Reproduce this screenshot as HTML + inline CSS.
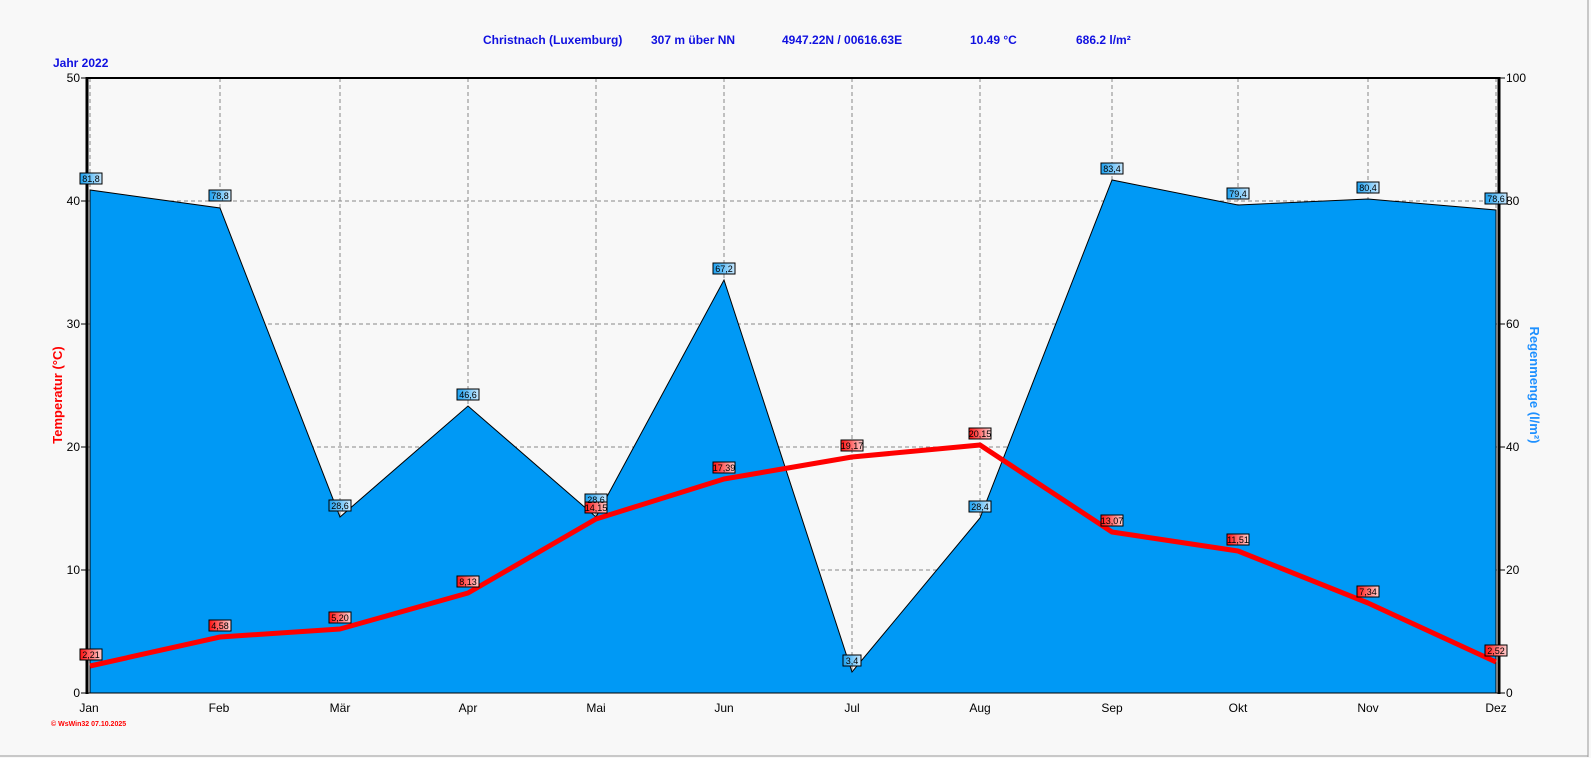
<!DOCTYPE html>
<html><head><meta charset="utf-8"><style>
html,body{margin:0;padding:0;background:#f8f8f8;}
svg{display:block;font-family:"Liberation Sans",sans-serif;}
</style></head><body>
<svg width="1591" height="758" viewBox="0 0 1591 758" xmlns="http://www.w3.org/2000/svg">
<defs>
<linearGradient id="bg" x1="0" x2="1"><stop offset="0" stop-color="#1aa0f0"/><stop offset="1" stop-color="#c8e8ff"/></linearGradient>
<linearGradient id="rg" x1="0" x2="1"><stop offset="0" stop-color="#ff1010"/><stop offset="1" stop-color="#ffd0d0"/></linearGradient>
</defs>
<rect width="1591" height="758" fill="#f8f8f8"/>
<line x1="1588" y1="0" x2="1588" y2="757" stroke="#999"/>
<line x1="0" y1="756" x2="1588" y2="756" stroke="#999"/>
<g font-weight="bold" font-size="12" fill="#1010e0">
<text x="483" y="44">Christnach (Luxemburg)</text>
<text x="651" y="44">307 m über NN</text>
<text x="782" y="44">4947.22N / 00616.63E</text>
<text x="970" y="44">10.49 °C</text>
<text x="1076" y="44">686.2 l/m²</text>
<text x="53" y="67">Jahr 2022</text>
</g>
<!-- grid -->
<g stroke="#888" stroke-dasharray="4,3" stroke-width="1">
<line x1="86" y1="201" x2="1499" y2="201"/><line x1="86" y1="324" x2="1499" y2="324"/>
<line x1="86" y1="447" x2="1499" y2="447"/><line x1="86" y1="570" x2="1499" y2="570"/>
<line x1="90" y1="78" x2="90" y2="693"/><line x1="220" y1="78" x2="220" y2="693"/>
<line x1="340" y1="78" x2="340" y2="693"/><line x1="468" y1="78" x2="468" y2="693"/>
<line x1="596" y1="78" x2="596" y2="693"/><line x1="724" y1="78" x2="724" y2="693"/>
<line x1="852" y1="78" x2="852" y2="693"/><line x1="980" y1="78" x2="980" y2="693"/>
<line x1="1112" y1="78" x2="1112" y2="693"/><line x1="1238" y1="78" x2="1238" y2="693"/>
<line x1="1368" y1="78" x2="1368" y2="693"/><line x1="1496" y1="78" x2="1496" y2="693"/>
</g>
<!-- rain area -->
<polygon fill="#0099f5" stroke="#000" stroke-width="1" points="90,693 90,190 220,208 340,517 468,406 596,517 724,280 852,672 980,518 1112,180 1238,205 1368,199 1496,210 1496,693"/>
<line x1="86" y1="78" x2="1499" y2="78" stroke="#000" stroke-width="2"/>
<line x1="86" y1="693" x2="1499" y2="693" stroke="#000" stroke-width="1"/>
<line x1="87" y1="77" x2="87" y2="694" stroke="#000" stroke-width="3"/>
<line x1="1499" y1="77" x2="1499" y2="694" stroke="#000" stroke-width="3"/>
<!-- temp line -->
<polyline fill="none" stroke="#ff0000" stroke-width="5" stroke-linejoin="round" points="90,666 220,637 340,629 468,593 596,519 724,479 852,457 980,445 1112,532 1238,551 1368,603 1496,662"/>
<!-- axis labels -->
<g font-size="12" fill="#000">
<g text-anchor="end">
<text x="80" y="82">50</text><text x="80" y="205">40</text><text x="80" y="328">30</text>
<text x="80" y="451">20</text><text x="80" y="574">10</text><text x="80" y="697">0</text>
</g>
<text x="1506" y="82">100</text><text x="1506" y="205">80</text><text x="1506" y="328">60</text>
<text x="1506" y="451">40</text><text x="1506" y="574">20</text><text x="1506" y="697">0</text>
<g text-anchor="middle">
<text x="89" y="712">Jan</text><text x="219" y="712">Feb</text><text x="340" y="712">Mär</text>
<text x="468" y="712">Apr</text><text x="596" y="712">Mai</text><text x="724" y="712">Jun</text>
<text x="852" y="712">Jul</text><text x="980" y="712">Aug</text><text x="1112" y="712">Sep</text>
<text x="1238" y="712">Okt</text><text x="1368" y="712">Nov</text><text x="1496" y="712">Dez</text>
</g>
</g>
<g stroke="#000"><line x1="81" y1="78" x2="86" y2="78"/><line x1="81" y1="201" x2="86" y2="201"/><line x1="81" y1="324" x2="86" y2="324"/><line x1="81" y1="447" x2="86" y2="447"/><line x1="81" y1="570" x2="86" y2="570"/><line x1="81" y1="693" x2="86" y2="693"/>
<line x1="1499" y1="78" x2="1505" y2="78"/><line x1="1499" y1="201" x2="1505" y2="201"/><line x1="1499" y1="324" x2="1505" y2="324"/><line x1="1499" y1="447" x2="1505" y2="447"/><line x1="1499" y1="570" x2="1505" y2="570"/><line x1="1499" y1="693" x2="1505" y2="693"/></g>
<text transform="translate(62,395) rotate(-90)" text-anchor="middle" font-size="13" font-weight="bold" fill="#ff0000">Temperatur  (°C)</text>
<text transform="translate(1530,385) rotate(90)" text-anchor="middle" font-size="13" font-weight="bold" fill="#1e90ff">Regenmenge  (l/m²)</text>
<text x="51" y="726" font-size="7" fill="#ff0000" font-weight="bold">© WsWin32  07.10.2025</text>
<!-- labels -->
<g font-size="9" text-anchor="middle" stroke="#000" stroke-width="1">
<g fill="url(#bg)">
<rect x="80" y="173" width="22" height="11"/><rect x="209" y="190" width="22" height="11"/>
<rect x="329" y="500" width="22" height="11"/><rect x="457" y="389" width="22" height="11"/>
<rect x="585" y="494" width="22" height="11"/><rect x="713" y="263" width="22" height="11"/>
<rect x="843" y="655" width="18" height="11"/><rect x="969" y="501" width="22" height="11"/>
<rect x="1101" y="163" width="22" height="11"/><rect x="1227" y="188" width="22" height="11"/>
<rect x="1357" y="182" width="22" height="11"/><rect x="1485" y="193" width="22" height="11"/>
</g>
<g fill="url(#rg)">
<rect x="80" y="649" width="22" height="11"/><rect x="209" y="620" width="22" height="11"/>
<rect x="329" y="612" width="22" height="11"/><rect x="457" y="576" width="22" height="11"/>
<rect x="585" y="502" width="22" height="11"/><rect x="713" y="462" width="22" height="11"/>
<rect x="841" y="440" width="22" height="11"/><rect x="969" y="428" width="22" height="11"/>
<rect x="1101" y="515" width="22" height="11"/><rect x="1227" y="534" width="22" height="11"/>
<rect x="1357" y="586" width="22" height="11"/><rect x="1485" y="645" width="22" height="11"/>
</g>
</g>
<g font-size="9" text-anchor="middle" fill="#000">
<text x="91" y="182">81,8</text><text x="220" y="199">78,8</text><text x="340" y="509">28,6</text><text x="468" y="398">46,6</text><text x="596" y="503">28,6</text><text x="724" y="272">67,2</text><text x="852" y="664">3,4</text><text x="980" y="510">28,4</text><text x="1112" y="172">83,4</text><text x="1238" y="197">79,4</text><text x="1368" y="191">80,4</text><text x="1496" y="202">78,6</text>
<text x="91" y="658">2,21</text><text x="220" y="629">4,58</text><text x="340" y="621">5,20</text><text x="468" y="585">8,13</text><text x="596" y="511">14,15</text><text x="724" y="471">17,39</text><text x="852" y="449">19,17</text><text x="980" y="437">20,15</text><text x="1112" y="524">13,07</text><text x="1238" y="543">11,51</text><text x="1368" y="595">7,34</text><text x="1496" y="654">2,52</text>
</g>
</svg>
</body></html>
